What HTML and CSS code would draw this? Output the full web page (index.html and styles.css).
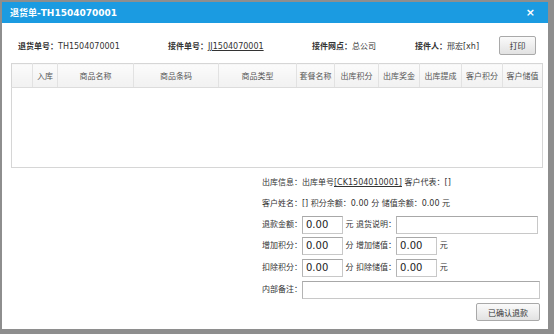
FILE: index.html
```html
<!DOCTYPE html>
<html lang="zh-CN">
  <head>
    <meta charset="UTF-8" />
    <meta name="viewport" content="width=device-width, initial-scale=1.0" />
    <link rel="stylesheet" href="styles.css">
    <title>退货单</title>
  </head>
  <body>
    <div class="dialog">
      <div class="titlebar">
        <span class="title">退货单-TH1504070001</span>
        <span class="close">×</span>
      </div>

      <div class="summary">
        <div class="field f-no"><b>退货单号：</b>TH1504070001</div>
        <div class="field f-jj"><b>接件单号：</b><a href="#">JJ1504070001</a></div>
        <div class="field f-site"><b>接件网点：</b>总公司</div>
        <div class="field f-user"><b>接件人：</b>邢宏[xh]</div>
        <button class="btn btn-print">打印</button>
      </div>

      <table class="goods">
        <colgroup>
          <col style="width:21px" />
          <col style="width:25px" />
          <col style="width:76px" />
          <col style="width:85px" />
          <col style="width:78px" />
          <col style="width:38px" />
          <col style="width:44px" />
          <col style="width:41px" />
          <col style="width:42px" />
          <col style="width:41px" />
          <col style="width:40px" />
        </colgroup>
        <thead>
          <tr>
            <th></th>
            <th>入库</th>
            <th>商品名称</th>
            <th>商品条码</th>
            <th>商品类型</th>
            <th>套餐名称</th>
            <th>出库积分</th>
            <th>出库奖金</th>
            <th>出库提成</th>
            <th>客户积分</th>
            <th>客户储值</th>
          </tr>
        </thead>
        <tbody>
          <tr class="empty"><td colspan="11"></td></tr>
        </tbody>
      </table>

      <div class="form">
        <div class="line">出库信息：出库单号<a href="#">[CK1504010001]</a> 客户代表：[]</div>
        <div class="line">客户姓名：[] 积分余额：0.00 分 储值余额：0.00 元</div>
        <div class="line">
          退款金额：<input class="ipt ipt-num" value="0.00" /> 元 退货说明：<input class="ipt ipt-note" />
        </div>
        <div class="line tall">
          增加积分：<input class="ipt ipt-num" value="0.00" /> 分 增加储值：<input class="ipt ipt-num" value="0.00" /> 元
        </div>
        <div class="line tall">
          扣除积分：<input class="ipt ipt-num" value="0.00" /> 分 扣除储值：<input class="ipt ipt-num" value="0.00" /> 元
        </div>
        <div class="line tall">
          内部备注：<input class="ipt ipt-memo" />
        </div>
        <div class="actions">
          <button class="btn btn-confirm">已确认退款</button>
        </div>
      </div>
    </div>
  </body>
</html>
```

FILE: styles.css
```css
html,
body {
  margin: 0;
  background: #8e8e8e;
  font-family: "DejaVu Sans", "Noto Sans CJK SC", sans-serif;
  font-size: 8px;
  color: #333;
}

.dialog {
  margin: 2px 6px 0 2px;
  height: 327px;
  background: #fff;
  display: flex;
  flex-direction: column;
}

.titlebar {
  height: 21px;
  background: #1b9be1;
  color: #fff;
  display: flex;
  align-items: center;
  justify-content: space-between;
  padding: 0 13px 0 8px;
}

.title {
  font-weight: bold;
  font-size: 9px;
}

.close {
  font-size: 11px;
  font-weight: bold;
}

.summary {
  display: flex;
  align-items: center;
  margin-top: 13px;
  height: 19px;
  padding-left: 16px;
}

.field {
  white-space: nowrap;
}

.field b {
  color: #333;
}

.f-no { width: 150px; }
.f-jj { width: 144px; }
.f-site { width: 103px; }
.f-user { width: 84px; }

a {
  color: #333;
}

.btn {
  font-family: inherit;
  font-size: 8px;
  color: #333;
  border: 1px solid #a9a9a9;
  border-radius: 2px;
  background: linear-gradient(#fafafa, #e2e2e2);
  padding: 0;
}

.btn-print {
  width: 37px;
  height: 19px;
}

.goods {
  margin: 8px 0 0 9px;
  width: 531px;
  border-collapse: collapse;
  table-layout: fixed;
  border: 1px solid #d6d6d6;
}

.goods th {
  height: 23px;
  padding: 0;
  font-weight: normal;
  color: #555;
  background: linear-gradient(#fbfbfb, #f1f1f1);
  border-right: 1px solid #e2e2e2;
  border-bottom: 1px solid #dcdcdc;
  white-space: nowrap;
}

.goods th:last-child {
  border-right: 0;
}

.goods .empty td {
  height: 79px;
  padding: 0;
}

.form {
  margin: 4px 0 0 260px;
}

.line {
  height: 21px;
  line-height: 21px;
  white-space: nowrap;
}

.line.tall {
  height: 22px;
  line-height: 22px;
}

.ipt {
  box-sizing: border-box;
  height: 18px;
  vertical-align: middle;
  border: 1px solid #c8c8c8;
  border-top-color: #a8a8a8;
  border-left-color: #b4b4b4;
  font-family: "DejaVu Sans", sans-serif;
  font-size: 10px;
  color: #222;
  padding: 0 3px;
  margin: 0;
}

.ipt-num { width: 41px; }
.ipt-note { width: 142px; }
.ipt-memo { width: 238px; }

.actions {
  display: flex;
  justify-content: flex-end;
  margin: 2px 8px 0 0;
}

.btn-confirm {
  width: 64px;
  height: 18px;
}
```
